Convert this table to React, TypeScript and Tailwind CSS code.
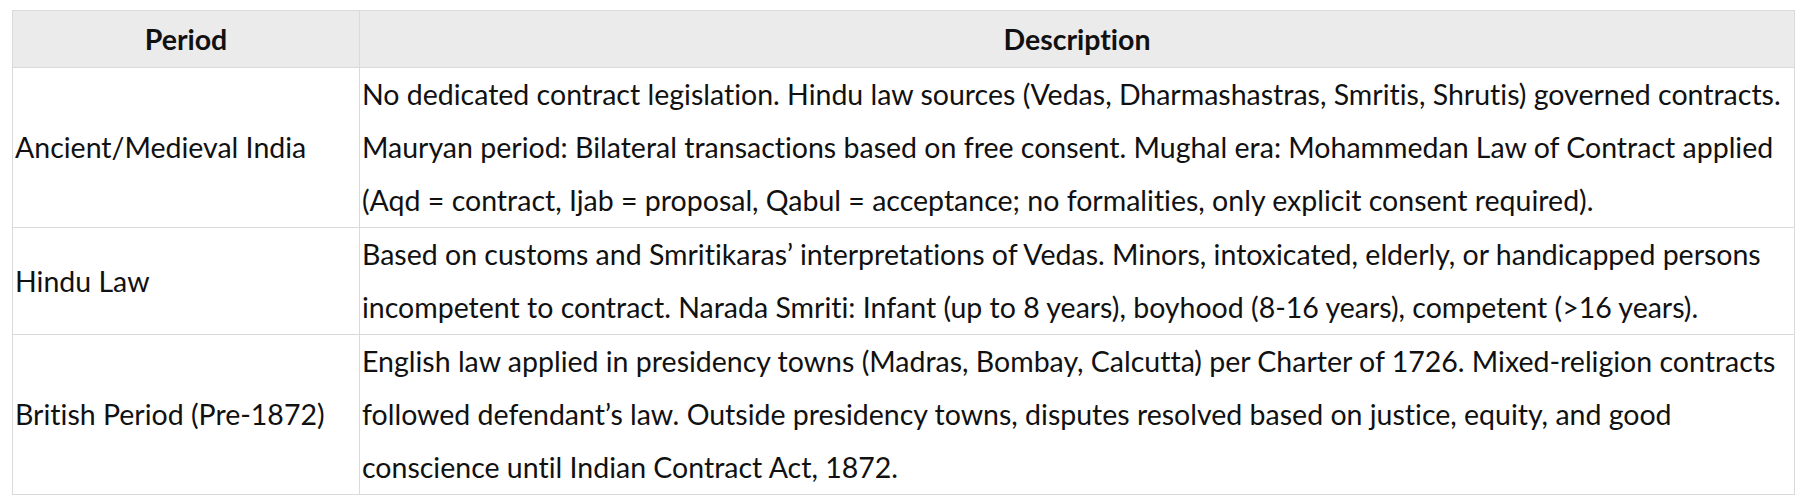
const rows = [
  {
    period: 'Ancient/Medieval India',
    lines: [
      'No dedicated contract legislation. Hindu law sources (Vedas, Dharmashastras, Smritis, Shrutis) governed contracts.',
      'Mauryan period: Bilateral transactions based on free consent. Mughal era: Mohammedan Law of Contract applied',
      '(Aqd = contract, Ijab = proposal, Qabul = acceptance; no formalities, only explicit consent required).',
    ],
  },
  {
    period: 'Hindu Law',
    lines: [
      'Based on customs and Smritikaras\u2019 interpretations of Vedas. Minors, intoxicated, elderly, or handicapped persons',
      'incompetent to contract. Narada Smriti: Infant (up to 8 years), boyhood (8-16 years), competent (>16 years).',
    ],
  },
  {
    period: 'British Period (Pre-1872)',
    lines: [
      'English law applied in presidency towns (Madras, Bombay, Calcutta) per Charter of 1726. Mixed-religion contracts',
      'followed defendant\u2019s law. Outside presidency towns, disputes resolved based on justice, equity, and good',
      'conscience until Indian Contract Act, 1872.',
    ],
  },
];

export default function App() {
  return (
    <div className="min-h-screen bg-white pt-[10px] pl-[12px] font-['Lato','Liberation_Sans',sans-serif] text-[#111] [font-variant-ligatures:none]">
      <table className="w-[1783px] table-fixed border-collapse border border-[#dadada] text-[28.5px]">
        <thead>
          <tr className="bg-[#ebebeb]">
            <th className="w-[347px] border border-[#dadada] px-[2px] py-0 text-center font-bold leading-[56px]">
              Period
            </th>
            <th className="border border-[#dadada] px-[2px] py-0 text-center font-bold leading-[56px]">
              Description
            </th>
          </tr>
        </thead>
        <tbody>
          {rows.map((r) => (
            <tr key={r.period}>
              <td className="border border-[#dadada] px-[2px] py-0 align-middle leading-[53px] whitespace-nowrap">
                {r.period}
              </td>
              <td className="border border-[#dadada] px-[2px] py-0 align-top leading-[53px] whitespace-nowrap">
                {r.lines.map((l) => (
                  <div key={l}>{l}</div>
                ))}
              </td>
            </tr>
          ))}
        </tbody>
      </table>
    </div>
  );
}
